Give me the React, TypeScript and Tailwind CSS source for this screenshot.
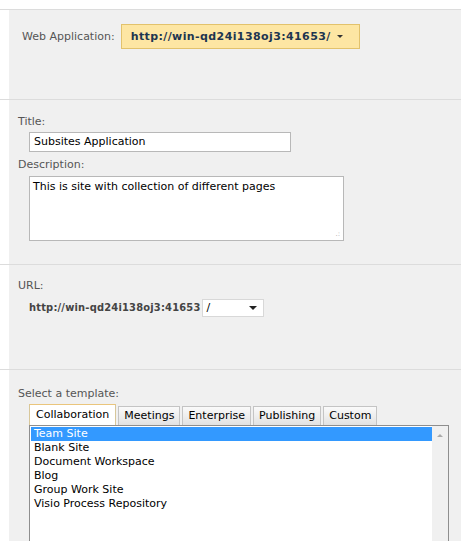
import { useState } from "react";

const templates = ["Team Site", "Blank Site", "Document Workspace", "Blog", "Group Work Site", "Visio Process Repository"];
const tabs = ["Collaboration", "Meetings", "Enterprise", "Publishing", "Custom"];

function Section({ className, children }: { className: string; children: React.ReactNode }) {
  return (
    <div className="flex border-t border-[#dcdcdc]">
      <div className="w-[9px] shrink-0 bg-white" />
      <div className={`flex-1 bg-[#f0f0f0] ${className}`}>{children}</div>
    </div>
  );
}

export default function App() {
  const [selected, setSelected] = useState(0);

  return (
    <div className="h-[541px] w-[461px] overflow-hidden bg-white text-[11px] leading-[14px] text-black [font-family:'DejaVu_Sans',Verdana,sans-serif]">
      <div className="h-[9px]" />

      <Section className="h-[89px] pl-[13px] pt-[14px]">
        <div className="flex items-center">
          <span className="text-[#555]">Web Application:</span>
          <div className="ml-[6px] flex h-[25px] w-[239px] items-center border border-[#e2c26c] bg-[#fde6a3] pl-[9px] text-[11px] font-bold tracking-[0.4px] text-[#1d3550]">
            <span>http://win-qd24i138oj3:41653/</span>
            <span className="ml-[6px] border-x-[3px] border-t-[3px] border-x-transparent border-t-[#333]" />
          </div>
        </div>
      </Section>

      <Section className="h-[164px] pl-[9px] pt-[15px]">
        <div className="text-[#555]">Title:</div>
        <div className="ml-[11px] mt-[3px] flex h-[20px] w-[262px] items-center border border-[#b8b8b8] bg-white pl-[4px]">
          Subsites Application
        </div>
        <div className="mt-[6px] text-[#555]">Description:</div>
        <div className="relative ml-[11px] mt-[4px] h-[65px] w-[315px] border border-[#b8b8b8] bg-white pl-[3px] pt-[3px]">
          This is site with collection of different pages
          <span className="absolute bottom-[2px] right-[3px] text-[7px] leading-[7px] text-[#aaa]">.:</span>
        </div>
      </Section>

      <Section className="h-[104px] pl-[9px] pt-[14px]">
        <div className="text-[#555]">URL:</div>
        <div className="ml-[11px] mt-[6px] flex items-center">
          <span className="text-[11px] font-bold tracking-[0.2px] text-[#444] [font-family:'DejaVu_Sans_Condensed','DejaVu_Sans',sans-serif]">http://win-qd24i138oj3:41653</span>
          <div className="ml-[1px] flex h-[18px] w-[62px] items-center justify-between border border-[#d8d8d8] bg-white pl-[4px] pr-[6px]">
            <span>/</span>
            <span className="border-x-[4px] border-t-[4px] border-x-transparent border-t-[#222]" />
          </div>
        </div>
      </Section>

      <Section className="h-[172px] pl-[9px] pt-[17px]">
        <div className="text-[#555]">Select a template:</div>
        <div className="ml-[11px] mt-[3px] flex items-end gap-[2px]">
          {tabs.map((t, i) => (
            <div
              key={t}
              className={
                i === 0
                  ? "flex h-[21px] items-center border border-b-0 border-[#d8c79a] border-t-[#eac57c] bg-white px-[6px]"
                  : "flex h-[19px] items-center border border-b-0 border-[#c4c4c4] bg-gradient-to-b from-[#fafafa] to-[#e2e2e2] px-[5px]"
              }
            >
              {t}
            </div>
          ))}
        </div>
        <div className="ml-[11px] flex h-[130px] w-[420px] border border-[#8e8e8e] bg-white">
          <div className="flex-1 py-[1px] pl-[1px]">
            {templates.map((t, i) => (
              <div
                key={t}
                onClick={() => setSelected(i)}
                className={`h-[14px] pl-[3px] ${selected === i ? "bg-[#3399ff] text-white" : ""}`}
              >
                {t}
              </div>
            ))}
          </div>
          <div className="w-[16px] bg-[#f0f0f0] pt-[8px]">
            <div className="mx-auto h-0 w-0 border-x-[3px] border-b-[3px] border-x-transparent border-b-[#aaa]" />
          </div>
        </div>
      </Section>
    </div>
  );
}
